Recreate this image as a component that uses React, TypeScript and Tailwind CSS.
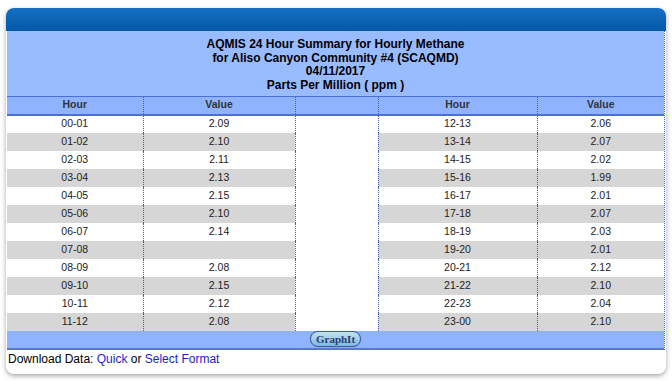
const left = [
  ['00-01', '2.09'],
  ['01-02', '2.10'],
  ['02-03', '2.11'],
  ['03-04', '2.13'],
  ['04-05', '2.15'],
  ['05-06', '2.10'],
  ['06-07', '2.14'],
  ['07-08', ''],
  ['08-09', '2.08'],
  ['09-10', '2.15'],
  ['10-11', '2.12'],
  ['11-12', '2.08'],
];

const right = [
  ['12-13', '2.06'],
  ['13-14', '2.07'],
  ['14-15', '2.02'],
  ['15-16', '1.99'],
  ['16-17', '2.01'],
  ['17-18', '2.07'],
  ['18-19', '2.03'],
  ['19-20', '2.01'],
  ['20-21', '2.12'],
  ['21-22', '2.10'],
  ['22-23', '2.04'],
  ['23-00', '2.10'],
];

const cell = 'h-[18px] p-0 text-center align-middle';
const divider = 'border-r border-dotted border-[#3f5fc8]';

export default function App() {
  return (
    <div className="min-h-screen bg-white pt-[8px] pl-[6px]" style={{ fontFamily: '"Liberation Sans", Arial, sans-serif' }}>
      <div className="w-[660px] rounded-lg bg-white shadow-[0_2px_5px_rgba(0,0,0,0.35)]">
        <div className="h-[23px] rounded-t-lg bg-gradient-to-b from-[#1570c4] to-[#0459a8]" />

        <div className="ml-px mr-px border-r border-dotted border-[#3f5fc8]">
          <div className="bg-[#99bbff] pt-[7px] h-[65px] text-center text-[12px] font-bold leading-[13.5px] text-black">
            <div>AQMIS 24 Hour Summary for Hourly Methane</div>
            <div>for Aliso Canyon Community #4 (SCAQMD)</div>
            <div>04/11/2017</div>
            <div>Parts Per Million ( ppm )</div>
          </div>

          <table className="w-full table-fixed border-collapse text-[10.5px] text-[#222]">
            <colgroup>
              <col className="w-[136px]" />
              <col className="w-[152px]" />
              <col className="w-[83px]" />
              <col className="w-[159px]" />
              <col />
            </colgroup>
            <thead>
              <tr className="border-t border-b-2 border-[#4a6fd6] bg-[#8fb3ff] font-bold text-[#333]">
                <th className={`${cell} h-[16px] ${divider}`}>Hour</th>
                <th className={`${cell} h-[16px] ${divider}`}>Value</th>
                <th className={`${cell} h-[16px] ${divider}`}></th>
                <th className={`${cell} h-[16px] ${divider}`}>Hour</th>
                <th className={`${cell} h-[16px]`}>Value</th>
              </tr>
            </thead>
            <tbody>
              {left.map((l, i) => {
                const r = right[i];
                const bg = i % 2 === 1 ? 'bg-[#d6d6d6]' : 'bg-white';
                return (
                  <tr key={l[0]}>
                    <td className={`${cell} ${bg} ${divider}`}>{l[0]}</td>
                    <td className={`${cell} ${bg} ${divider}`}>{l[1]}</td>
                    {i === 0 && <td rowSpan={12} className={`p-0 bg-white ${divider}`} />}
                    <td className={`${cell} ${bg} ${divider}`}>{r[0]}</td>
                    <td className={`${cell} ${bg}`}>{r[1]}</td>
                  </tr>
                );
              })}
            </tbody>
          </table>

          <div className="flex h-[19px] items-center justify-center border-b-2 border-[#5a78cc] bg-[#8fb3ff]">
            <button
              className="h-[16px] rounded-full border border-[#3d5a99] bg-gradient-to-b from-[#c2e2f8] to-[#7cb6e4] px-[5px] text-[11px] font-bold leading-[13px] text-[#2b3f6b] shadow-[0_0_1px_rgba(0,0,0,0.4)]"
              style={{ fontFamily: '"Liberation Serif", "Times New Roman", serif' }}
            >
              GraphIt
            </button>
          </div>
        </div>

        <div className="h-[24px] pl-[2px] pt-[2px] text-[12px] leading-[14px] text-black">
          Download Data: <span className="text-[#1a22cc]">Quick</span> or{' '}
          <span className="text-[#1a22cc]">Select Format</span>
        </div>
      </div>
    </div>
  );
}
